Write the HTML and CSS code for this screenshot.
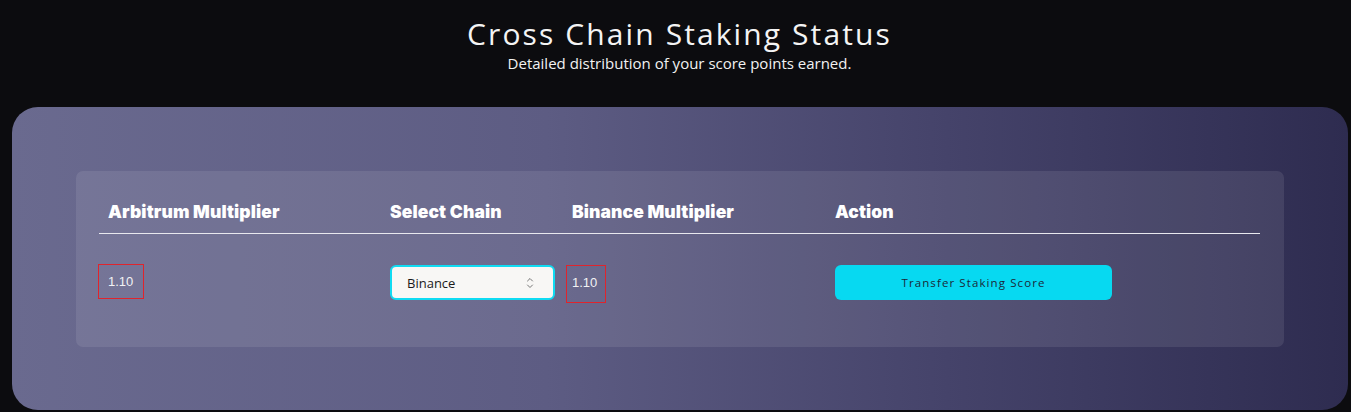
FILE: index.html
```html
<!DOCTYPE html>
<html lang="en">
<head>
<meta charset="utf-8">
<title>Cross Chain Staking Status</title>
<link rel="stylesheet" href="styles.css">
</head>
<body>
<header class="intro">
  <h1 class="title">Cross Chain Staking Status</h1>
  <p class="subtitle">Detailed distribution of your score points earned.</p>
</header>
<section class="panel">
  <div class="card">
    <div class="table">
      <div class="th th-1">Arbitrum Multiplier</div>
      <div class="th th-2">Select Chain</div>
      <div class="th th-3">Binance Multiplier</div>
      <div class="th th-4">Action</div>
      <div class="rule"></div>
      <div class="td td-1"><span class="value value-a">1.10</span></div>
      <div class="td td-2">
        <div class="select">
          <span>Binance</span>
          <svg class="chev" width="10" height="14" viewBox="0 0 10 14" fill="none" stroke="#777" stroke-width="1" stroke-linecap="round" stroke-linejoin="round"><path d="M2.5 5 L5 2.5 L7.5 5"/><path d="M2.5 9 L5 11.5 L7.5 9"/></svg>
        </div>
      </div>
      <div class="td td-3"><span class="value value-b">1.10</span></div>
      <div class="td td-4"><button class="btn">Transfer Staking Score</button></div>
    </div>
  </div>
</section>
</body>
</html>
```
FILE: styles.css
```css
html, body {
  margin: 0;
  padding: 0;
  background: #0c0c0f;
  font-family: "Open Sans", "Noto Sans", sans-serif;
  color: #fff;
}
.intro {
  text-align: center;
  padding: 14px 0 0 8px;
  height: 94px;
  box-sizing: border-box;
}
.title {
  margin: 0;
  font-weight: 400;
  font-size: 30px;
  line-height: 40px;
  letter-spacing: 2.1px;
  color: #f4f4f4;
}
.subtitle {
  margin: 0;
  font-size: 15px;
  line-height: 19px;
  color: #f2f2f2;
}
.panel {
  margin: 13px 3px 0 12px;
  height: 303px;
  box-sizing: border-box;
  border-radius: 26px;
  background: linear-gradient(90deg, #6a6a8f 0%, #5d5c83 40%, #45436a 70%, #2e2c50 100%);
  padding: 64px 64px 0 64px;
}
.card {
  height: 176px;
  box-sizing: border-box;
  background: rgba(255, 255, 255, 0.09);
  border-radius: 7px;
  padding: 0 24px 0 23px;
}
.table {
  display: grid;
  grid-template-columns: 291px 176px 269px 1fr;
  grid-template-rows: 62px 1px auto;
}
.th {
  font-family: "Inter", "Lato", sans-serif;
  font-weight: 900;
  font-size: 17.5px;
  letter-spacing: 0.1px;
  color: #fff;
  display: flex;
  align-items: center;
  padding-top: 19px;
  box-sizing: border-box;
}
.th-1 { padding-left: 9px; }
.th-3 { padding-left: 6px; }
.rule {
  grid-column: 1 / -1;
  background: #e8e8ee;
}
.td {
  padding-top: 30px;
  display: flex;
  align-items: flex-start;
}
.td-1 { margin-left: -1px; }
.value {
  display: inline-block;
  border: 1px solid #e0242c;
  font-family: "Liberation Sans", Arial, sans-serif;
  font-size: 13px;
  color: #f2f2f4;
  box-sizing: border-box;
}
.value-a {
  width: 46px;
  height: 35px;
  line-height: 34px;
  padding-left: 9px;
}
.value-b {
  width: 40px;
  height: 38px;
  line-height: 34px;
  padding-left: 5px;
  margin-top: 1px;
}
.td-2 { padding-top: 31px; }
.select {
  width: 165px;
  height: 35px;
  box-sizing: border-box;
  border: 2px solid #10dbf2;
  border-radius: 6px;
  background: #f8f7f5;
  display: flex;
  align-items: center;
  justify-content: space-between;
  padding: 0 18px 0 15px;
  font-size: 13px;
  color: #1a1a1a;
}
.chev { display: block; }
.td-4 { padding-top: 31px; }
.btn {
  width: 277px;
  height: 35px;
  border: none;
  border-radius: 6px;
  background: #07d9f1;
  font-family: "Open Sans", "Noto Sans", sans-serif;
  font-size: 11.5px;
  letter-spacing: 1.1px;
  color: #1b2838;
  cursor: pointer;
}
```
